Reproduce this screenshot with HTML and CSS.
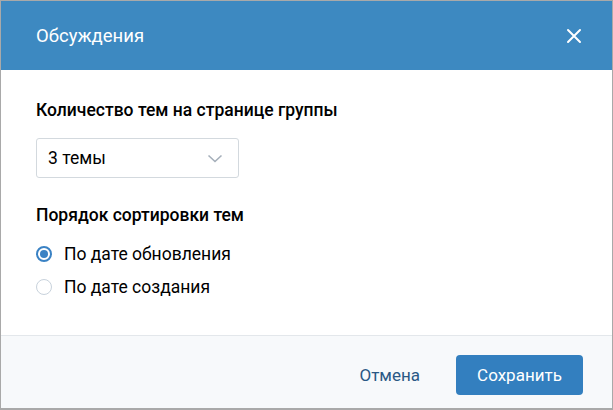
FILE: index.html
```html
<!DOCTYPE html>
<html lang="ru">
<head>
  <meta charset="UTF-8" />
  <title>Обсуждения</title>
  <link rel="stylesheet" href="styles.css">
</head>
<body>
  <div class="dialog">
    <header class="dialog-head">
      <h1>Обсуждения</h1>
      <button class="close" aria-label="Закрыть">
        <svg width="16" height="16" viewBox="0 0 16 16"><path d="M2 2L14 14M14 2L2 14" stroke="#fff" stroke-width="2" stroke-linecap="round"/></svg>
      </button>
    </header>

    <div class="dialog-body">
      <h2>Количество тем на странице группы</h2>
      <div class="select">
        <span>3 темы</span>
        <svg width="16" height="10" viewBox="0 0 16 10"><path d="M1.5 1.5L8 7.5L14.5 1.5" fill="none" stroke="#a5afba" stroke-width="1.6"/></svg>
      </div>

      <h2 class="sort-title">Порядок сортировки тем</h2>
      <label class="radio checked"><span class="dot"></span>По дате обновления</label>
      <label class="radio"><span class="dot"></span>По дате создания</label>
    </div>

    <footer class="dialog-foot">
      <button class="cancel">Отмена</button>
      <button class="save">Сохранить</button>
    </footer>
  </div>
</body>
</html>
```

FILE: styles.css
```css
body { margin: 0; font-family: Roboto, "Liberation Sans", Arial, sans-serif; color: #000; }
.dialog { width: 613px; height: 410px; box-sizing: border-box; border: 1px solid #a9a9a9; border-bottom-width: 2px; display: flex; flex-direction: column; background: #fff; }
.dialog-head { height: 69px; background: #3d89c1; display: flex; align-items: center; justify-content: space-between; padding: 0 30px 0 35px; flex-shrink: 0; }
.dialog-head h1 { margin: 0; font-size: 18.5px; font-weight: 400; color: #fff; }
.close { background: none; border: none; padding: 0; display: flex; cursor: pointer; }
.dialog-body { flex: 1; padding: 30px 35px 0; }
.dialog-body h2 { margin: 0; font-size: 17.5px; font-weight: 500; line-height: 20px; color: #000; }
.select { margin-top: 18px; width: 203px; height: 40px; box-sizing: border-box; border: 1px solid #d3d9de; border-radius: 3px; display: flex; align-items: center; justify-content: space-between; padding: 0 15px 0 11px; font-size: 17.5px; }
.select svg { margin-top: 1px; }
.sort-title { margin-top: 27px !important; }
.radio { display: flex; align-items: center; gap: 12px; height: 20px; font-size: 17.5px; margin-top: 13px; }
.radio:first-of-type { margin-top: 19px; }
.dot { width: 16px; height: 16px; box-sizing: border-box; border-radius: 50%; border: 1.5px solid #c8d2dc; position: relative; flex-shrink: 0; }
.radio.checked .dot { border: 2px solid #3a82c4; }
.radio.checked .dot::after { content: ""; position: absolute; left: 2px; top: 2px; width: 8px; height: 8px; border-radius: 50%; background: #3a82c4; }
.dialog-foot { height: 73px; box-sizing: border-box; border-top: 1px solid #e3e7eb; background: #f7f9fb; display: flex; align-items: center; justify-content: flex-end; padding: 5px 29px 0 0; gap: 16px; }
.dialog-foot button { font-family: inherit; font-size: 17px; border: none; cursor: pointer; }
.cancel { background: none; color: #2a5885; padding: 0 20px; height: 40px; }
.save { background: #337fbf; color: #fff; height: 40px; width: 127px; border-radius: 4px; }
```
